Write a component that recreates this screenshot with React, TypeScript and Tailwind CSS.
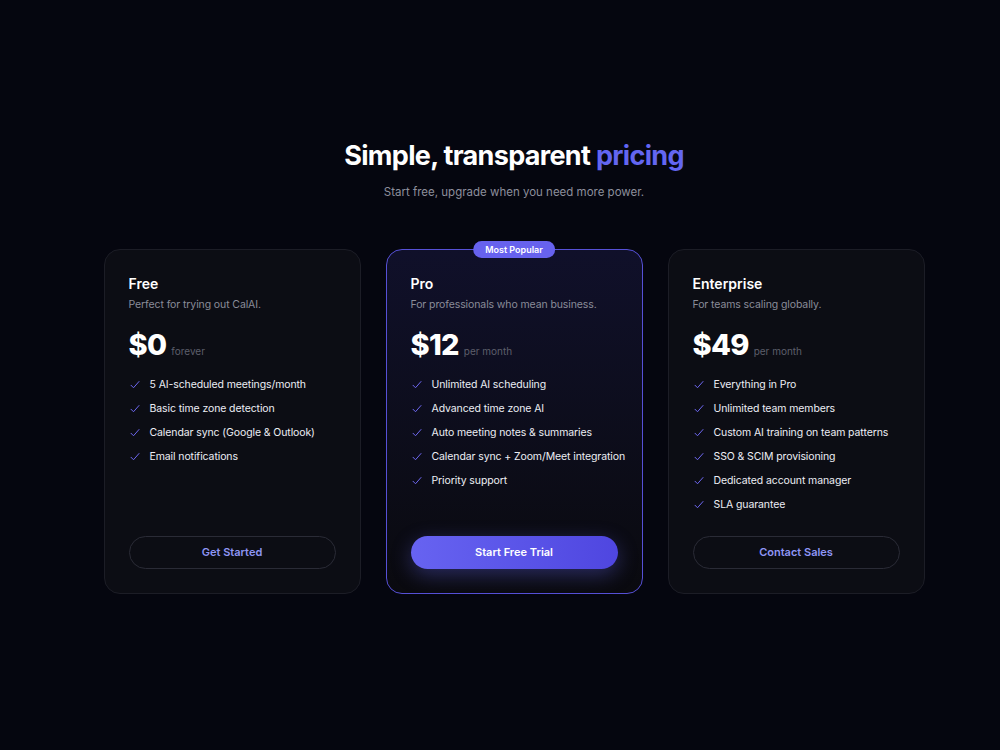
import React from "react";

type Plan = {
  name: string;
  blurb: string;
  price: string;
  period: string;
  features: string[];
  cta: string;
  featured?: boolean;
};

const plans: Plan[] = [
  {
    name: "Free",
    blurb: "Perfect for trying out CalAI.",
    price: "$0",
    period: "forever",
    features: [
      "5 AI-scheduled meetings/month",
      "Basic time zone detection",
      "Calendar sync (Google & Outlook)",
      "Email notifications",
    ],
    cta: "Get Started",
  },
  {
    name: "Pro",
    blurb: "For professionals who mean business.",
    price: "$12",
    period: "per month",
    features: [
      "Unlimited AI scheduling",
      "Advanced time zone AI",
      "Auto meeting notes & summaries",
      "Calendar sync + Zoom/Meet integration",
      "Priority support",
    ],
    cta: "Start Free Trial",
    featured: true,
  },
  {
    name: "Enterprise",
    blurb: "For teams scaling globally.",
    price: "$49",
    period: "per month",
    features: [
      "Everything in Pro",
      "Unlimited team members",
      "Custom AI training on team patterns",
      "SSO & SCIM provisioning",
      "Dedicated account manager",
      "SLA guarantee",
    ],
    cta: "Contact Sales",
  },
];

function Check() {
  return (
    <svg width="12" height="12" viewBox="0 0 24 24" fill="none" stroke="#6d67f0" strokeWidth="2" strokeLinecap="round" strokeLinejoin="round" className="shrink-0">
      <path d="M4 12.5l5 5L20 5" />
    </svg>
  );
}

function PlanCard({ plan }: { plan: Plan }) {
  const cardClass = plan.featured
    ? "relative flex flex-col rounded-2xl border border-[#5650d6] bg-gradient-to-b from-[#10102a] to-[#0a0a0f] p-6"
    : "relative flex flex-col rounded-2xl border border-[#1c1d26] bg-[#0c0d14] p-6";

  return (
    <div className={cardClass}>
      {plan.featured && (
        <div className="absolute -top-[9px] left-1/2 -translate-x-1/2 rounded-full bg-[#6762ee] px-3 py-[2px] text-[9px] font-semibold leading-[13px] text-white">
          Most Popular
        </div>
      )}
      <h3 className="text-[14px] font-semibold leading-5 text-white">{plan.name}</h3>
      <p className="mt-[3px] text-[10.5px] leading-4 tracking-[-0.01em] text-[#8a8c99]">{plan.blurb}</p>
      <div className="mt-[14px] flex items-baseline gap-[5px]">
        <span className="text-[29px] font-extrabold leading-9 tracking-tight text-white">{plan.price}</span>
        <span className="text-[10px] text-[#5d5f6b]">{plan.period}</span>
      </div>
      <ul className="mt-[14px] space-y-2">
        {plan.features.map((f) => (
          <li key={f} className="flex items-center gap-[9px] text-[10.5px] leading-4 tracking-[-0.01em] text-[#eceef4]">
            <Check />
            <span className="whitespace-nowrap">{f}</span>
          </li>
        ))}
      </ul>
      <div className="mt-auto pt-[23px]">
        {plan.featured ? (
          <button className="h-[33px] w-full rounded-full bg-gradient-to-r from-[#6763f1] to-[#4f46e0] text-[11px] font-semibold text-white shadow-[0_6px_20px_rgba(99,102,241,0.35)]">
            {plan.cta}
          </button>
        ) : (
          <button className="h-[33px] w-full rounded-full border border-[#2a2b36] text-[11px] font-semibold text-[#8f96f5]">
            {plan.cta}
          </button>
        )}
      </div>
    </div>
  );
}

export default function App() {
  return (
    <div className="min-h-[750px] bg-[#05060f] pl-[28px] pt-[139px] font-['Inter',sans-serif]">
      <div className="text-center">
        <h2 className="text-[27px] font-bold leading-[34px] tracking-tight text-white">
          Simple, transparent <span className="text-[#6366f1]">pricing</span>
        </h2>
        <p className="mt-[9px] text-[11.5px] leading-5 text-[#8d8f9c]">
          Start free, upgrade when you need more power.
        </p>
      </div>
      <div className="mx-auto mt-[47px] grid w-[821px] grid-cols-3 gap-[25px]">
        {plans.map((p) => (
          <PlanCard key={p.name} plan={p} />
        ))}
      </div>
    </div>
  );
}
